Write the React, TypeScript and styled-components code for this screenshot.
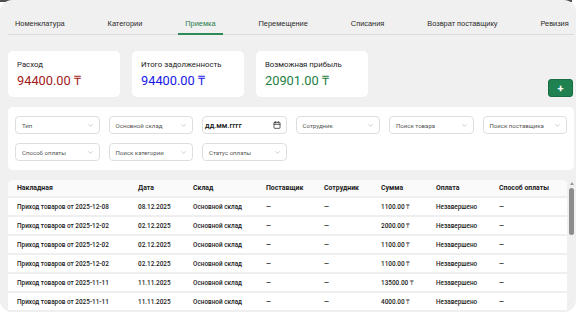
import React from 'react';
import styled, {createGlobalStyle} from "styled-components";
import {ChevronDown, Calendar} from "lucide-react";

const GlobalStyle = createGlobalStyle`
  html, body {
    margin: 0;
    padding: 0;
    background: #ffffff;
  }

  body {
    font-family: "Liberation Sans", Arial, sans-serif;
    color: #222;
  }
`
const Frame = styled.div`
  width: 582px;
  height: 320px;
  overflow: hidden;
  background: #ffffff;
`
const TopStrip = styled.div`
  width: 572px;
  height: 2px;
  background: #505050;
`
const Page = styled.div`
  display: flex;
  flex-direction: column;
  width: 576px;
  height: 312px;
  margin-top: -2px;
  padding: 0 1px 0 8px;
  box-sizing: border-box;
  overflow: hidden;

  background: #f0f0f0;
  border-radius: 12px;
`
const Tabs = styled.nav`
  display: flex;
  gap: 29px;
  padding: 19px 0 0 0;
  margin-right: 1px;
  border-bottom: 1px solid #dcdcdc;
`
const Tab = styled.div<{ $active?: boolean }>`
  padding: 0 7px 5px 7px;
  margin-bottom: -1px;

  font-size: 7.4px;
  line-height: 9px;
  white-space: nowrap;
  color: ${props => props.$active ? '#1f7a4a' : '#2a2a2a'};

  border-bottom: 2px solid ${props => props.$active ? '#2b8a57' : 'transparent'};
`
const Summary = styled.div`
  display: flex;
  align-items: flex-end;
  justify-content: space-between;
  margin: 16px 1px 0 0;
`
const Cards = styled.div`
  display: flex;
  gap: 12px;
`
const Card = styled.div`
  display: flex;
  flex-direction: column;
  gap: 3px;
  width: 112px;
  height: 46px;
  padding: 9px 0 0 9px;
  box-sizing: border-box;

  background: #ffffff;
  border-radius: 5px;
`
const CardLabel = styled.div`
  font-family: Roboto, sans-serif;
  font-size: 7.8px;
  line-height: 10px;
  color: #1e1e1e;
`
const CardValue = styled.div<{ $color: string }>`
  font-family: Roboto, sans-serif;
  font-size: 12.8px;
  line-height: 16px;
  color: ${props => props.$color};
`
const AddButton = styled.button`
  display: flex;
  align-items: center;
  justify-content: center;
  width: 25px;
  height: 18px;
  margin: 0 1px 0 0;
  padding: 0;

  font-family: Roboto, sans-serif;
  font-size: 11px;
  font-weight: 700;
  color: #ffffff;

  background: #1f8050;
  border: 1px solid #186b42;
  border-radius: 3px;
`
const Filters = styled.div`
  display: grid;
  grid-template-columns: repeat(6, 1fr);
  gap: 9px 9px;
  margin: 10px 1px 0 0;
  padding: 9px 7px;

  background: #ffffff;
  border-radius: 5px;
`
const Field = styled.div<{ $strong?: boolean }>`
  display: flex;
  align-items: center;
  justify-content: space-between;
  height: 18px;
  padding: 0 5px 0 ${props => props.$strong ? 2 : 6}px;
  box-sizing: border-box;

  font-family: Roboto, sans-serif;
  font-size: ${props => props.$strong ? 7.4 : 6.1}px;
  font-weight: ${props => props.$strong ? 500 : 400};
  color: ${props => props.$strong ? '#111' : '#555'};
  white-space: nowrap;

  border: 1px solid #dedede;
  border-radius: 4px;

  svg {
    flex: none;
  }
`
const TableArea = styled.div`
  display: flex;
  flex: 1;
  min-height: 0;
  margin: 10px 0 0 0;
`
const TableScroll = styled.div`
  flex: 1;
  overflow: hidden;
  border-radius: 5px 5px 0 0;
`
const ScrollRail = styled.div`
  display: flex;
  flex-direction: column;
  align-items: center;
  width: 8px;
  padding: 2px 0 0 1px;
  box-sizing: border-box;
`
const RailArrow = styled.div`
  width: 0;
  height: 0;
  margin: 0 0 3px 0;
  border-left: 2.5px solid transparent;
  border-right: 2.5px solid transparent;
  border-bottom: 3px solid #9a9a9a;
`
const RailThumb = styled.div`
  width: 5px;
  height: 47px;
  background: #8c8c8c;
  border-radius: 3px;
`
const Table = styled.table`
  width: 559px;
  table-layout: fixed;
  border-collapse: collapse;

  font-family: Roboto, sans-serif;
  font-size: 6.4px;
  color: #1a1a1a;

  background: #ffffff;
`
const HeadCell = styled.th`
  height: 16px;
  padding: 0 0 0 9px;

  font-size: 6.9px;
  font-weight: 700;
  text-align: left;
  white-space: nowrap;

  background: #fafafa;
  border-bottom: 2px solid #efefef;
`
const Cell = styled.td`
  height: 17px;
  padding: 0 0 0 9px;

  font-weight: 500;
  white-space: nowrap;

  border-bottom: 2px solid #efefef;
`

const tabs = ['Номенклатура', 'Категории', 'Приемка', 'Перемещение', 'Списания', 'Возврат поставщику', 'Ревизия'];

const columns = [
  {title: 'Накладная', width: 121},
  {title: 'Дата', width: 55},
  {title: 'Склад', width: 73},
  {title: 'Поставщик', width: 58},
  {title: 'Сотрудник', width: 57},
  {title: 'Сумма', width: 55},
  {title: 'Оплата', width: 63},
  {title: 'Способ оплаты', width: 77},
];

const rows = [
  ['2025-12-08', '08.12.2025', '1100.00'],
  ['2025-12-02', '02.12.2025', '2000.00'],
  ['2025-12-02', '02.12.2025', '1100.00'],
  ['2025-12-02', '02.12.2025', '1100.00'],
  ['2025-11-11', '11.11.2025', '13500.00'],
  ['2025-11-11', '11.11.2025', '4000.00'],
  ['2025-10-30', '30.10.2025', '1100.00'],
  ['2025-10-30', '30.10.2025', '1100.00'],
];

const filters = ['Тип', 'Основной склад', null, 'Сотрудник', 'Поиск товара', 'Поиск поставщика', 'Способ оплаты', 'Поиск категории', 'Статус оплаты'];

function App() {
  return (
    <Frame>
      <GlobalStyle/>
      <TopStrip/>
      <Page>
        <Tabs>
          {tabs.map(t => <Tab key={t} $active={t === 'Приемка'}>{t}</Tab>)}
        </Tabs>
        <Summary>
          <Cards>
            <Card>
              <CardLabel>Расход</CardLabel>
              <CardValue $color="#a31b1b">94400.00 ₸</CardValue>
            </Card>
            <Card>
              <CardLabel>Итого задолженность</CardLabel>
              <CardValue $color="#1717e6">94400.00 ₸</CardValue>
            </Card>
            <Card>
              <CardLabel>Возможная прибыль</CardLabel>
              <CardValue $color="#23803f">20901.00 ₸</CardValue>
            </Card>
          </Cards>
          <AddButton>+</AddButton>
        </Summary>
        <Filters>
          {filters.map((f, i) => f === null
            ? <Field key={i} $strong>дд.мм.гггг<Calendar size={8} color="#222" strokeWidth={2.2}/></Field>
            : <Field key={i}>{f}<ChevronDown size={7} color="#aaa"/></Field>
          )}
        </Filters>
        <TableArea>
          <TableScroll>
            <Table>
              <colgroup>
                {columns.map(c => <col key={c.title} style={{width: c.width}}/>)}
              </colgroup>
              <thead>
                <tr>
                  {columns.map(c => <HeadCell key={c.title}>{c.title}</HeadCell>)}
                </tr>
              </thead>
              <tbody>
                {rows.map(([d, date, sum], i) => (
                  <tr key={i}>
                    <Cell>Приход товаров от {d}</Cell>
                    <Cell>{date}</Cell>
                    <Cell>Основной склад</Cell>
                    <Cell>—</Cell>
                    <Cell>—</Cell>
                    <Cell>{sum} ₸</Cell>
                    <Cell>Незавершено</Cell>
                    <Cell>—</Cell>
                  </tr>
                ))}
              </tbody>
            </Table>
          </TableScroll>
          <ScrollRail>
            <RailArrow/>
            <RailThumb/>
          </ScrollRail>
        </TableArea>
      </Page>
    </Frame>
  );
}

export default App;
